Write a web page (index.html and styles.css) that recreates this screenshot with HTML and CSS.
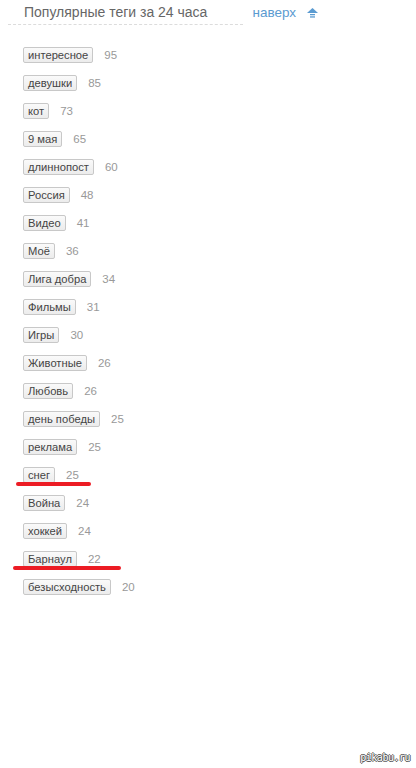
FILE: index.html
```html
<!DOCTYPE html>
<html lang="ru">
<head>
  <meta charset="UTF-8">
  <title>Популярные теги</title>
  <link rel="stylesheet" href="styles.css">
</head>
<body>

  <!-- HEADER -->
  <div class="head">
    <span class="head-title">Популярные теги за 24 часа</span>
    <a class="up-link" href="#">наверх
      <svg class="up-icon" width="11" height="10" viewBox="0 0 11 10">
        <polygon points="5.5,0 11,5 0,5" fill="#5b9bd1"/>
        <rect x="3" y="6" width="5" height="1.3" fill="#5b9bd1"/>
        <rect x="3" y="8.3" width="5" height="1.3" fill="#5b9bd1"/>
      </svg>
    </a>
  </div>

  <!-- TAG LIST -->
  <ul class="tags">
    <li><span class="tag">интересное</span><span class="count">95</span></li>
    <li><span class="tag">девушки</span><span class="count">85</span></li>
    <li><span class="tag">кот</span><span class="count">73</span></li>
    <li><span class="tag">9 мая</span><span class="count">65</span></li>
    <li><span class="tag">длиннопост</span><span class="count">60</span></li>
    <li><span class="tag">Россия</span><span class="count">48</span></li>
    <li><span class="tag">Видео</span><span class="count">41</span></li>
    <li><span class="tag">Моё</span><span class="count">36</span></li>
    <li><span class="tag">Лига добра</span><span class="count">34</span></li>
    <li><span class="tag">Фильмы</span><span class="count">31</span></li>
    <li><span class="tag">Игры</span><span class="count">30</span></li>
    <li><span class="tag">Животные</span><span class="count">26</span></li>
    <li><span class="tag">Любовь</span><span class="count">26</span></li>
    <li><span class="tag">день победы</span><span class="count">25</span></li>
    <li><span class="tag">реклама</span><span class="count">25</span></li>
    <li class="marked short"><span class="tag">снег</span><span class="count">25</span></li>
    <li><span class="tag">Война</span><span class="count">24</span></li>
    <li><span class="tag">хоккей</span><span class="count">24</span></li>
    <li class="marked long"><span class="tag">Барнаул</span><span class="count">22</span></li>
    <li><span class="tag">безысходность</span><span class="count">20</span></li>
  </ul>

  <div class="watermark">pikabu.ru</div>

</body>
</html>
```

FILE: styles.css
```css
body {
  margin: 0;
  background: #fff;
  font-family: 'Liberation Sans', Arial, sans-serif;
  width: 416px;
  height: 768px;
  position: relative;
  overflow: hidden;
}
.head {
  display: flex;
  align-items: baseline;
  margin-left: 8px;
  width: 235px;
  height: 25px;
  padding-left: 16px;
  border-bottom: 1px dashed #dcdcdc;
  box-sizing: border-box;
  white-space: nowrap;
}
.head-title {
  color: #666;
  font-size: 14px;
  line-height: 25px;
}
.up-link {
  margin-left: 45px;
  color: #5b9bd1;
  font-size: 13.5px;
  text-decoration: none;
}
.up-icon {
  margin-left: 7px;
  vertical-align: -1px;
}
.tags {
  list-style: none;
  margin: 16px 0 0 23px;
  padding: 0;
}
.tags li {
  display: flex;
  align-items: center;
  height: 28px;
  position: relative;
}
.tag {
  display: inline-block;
  height: 16px;
  line-height: 14px;
  padding: 0 4px;
  box-sizing: border-box;
  border: 1px solid #c8c8c8;
  border-radius: 2px;
  background: linear-gradient(#fafafa, #ececec);
  color: #444;
  font-size: 11.2px;
}
.count {
  margin-left: 11px;
  color: #999;
  font-size: 11.5px;
}
.marked::after {
  content: "";
  position: absolute;
  height: 4px;
  border-radius: 2px;
  background: #ec1c24;
}
.short::after {
  left: -7px;
  width: 75px;
  top: 21px;
}
.long::after {
  left: -10px;
  width: 108px;
  top: 21px;
}
.watermark {
  position: absolute;
  right: 6px;
  bottom: 5px;
  color: #fff;
  font-family: 'DejaVu Sans Mono', monospace;
  font-size: 10px;
  letter-spacing: -0.5px;
  text-shadow: 1px 0 #555, -1px 0 #555, 0 1px #555, 0 -1px #555;
}
```
